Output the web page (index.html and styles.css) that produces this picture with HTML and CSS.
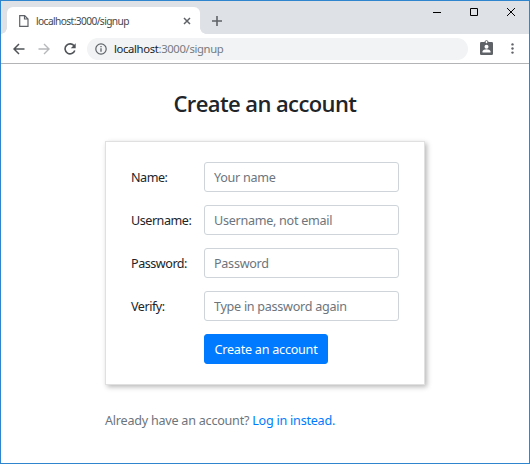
FILE: index.html
```html
<!DOCTYPE html>
<html lang="en">
<head>
<meta charset="utf-8">
<title>Create an account</title>
<link rel="stylesheet" href="styles.css">
</head>
<body>
<div class="window">
  <div class="titlebar">
    <div class="tab">
      <svg class="file" width="10" height="12" viewBox="0 0 10 12"><path d="M.7.7h5l3.3 3.3v7.3H.7zM5.5.7V4H9" fill="none" stroke="#5f6368" stroke-width="1.2"/></svg>
      <span class="tab-title">localhost:3000/signup</span>
      <svg class="tab-close" width="8" height="8" viewBox="0 0 8 8"><path d="M1 1l6 6M7 1L1 7" stroke="#5f6368" stroke-width="1.5"/></svg>
    </div>
    <svg class="new-tab" width="10" height="10" viewBox="0 0 10 10"><path d="M5 0v10M0 5h10" stroke="#5f6368" stroke-width="1.6"/></svg>
    <div class="controls">
      <svg width="8" height="8" viewBox="0 0 8 8"><path d="M0 4.5h8" stroke="#000"/></svg>
      <svg width="8" height="8" viewBox="0 0 8 8"><path d="M.5.5h7v7h-7z" fill="none" stroke="#000"/></svg>
      <svg width="8" height="8" viewBox="0 0 8 8"><path d="M0 0l8 8M8 0L0 8" stroke="#000"/></svg>
    </div>
  </div>
  <div class="toolbar">
    <svg class="back" width="12" height="12" viewBox="0 0 12 12"><path d="M11.5 6H1.3M6 1L1 6l5 5" fill="none" stroke="#505458" stroke-width="1.5"/></svg>
    <svg class="forward" width="12" height="12" viewBox="0 0 12 12"><path d="M.5 6h10.2M6 1l5 5-5 5" fill="none" stroke="#b6b8ba" stroke-width="1.4"/></svg>
    <svg class="reload" width="12" height="12" viewBox="0 0 12 12"><path d="M10.3 3.2A5 5 0 1 0 10.8 7.5" fill="none" stroke="#505458" stroke-width="1.6"/><path d="M11.7.3v5H6.8z" fill="#505458"/></svg>
    <div class="address">
      <svg width="12" height="12" viewBox="0 0 12 12"><circle cx="6" cy="6" r="5.2" fill="none" stroke="#5f6368" stroke-width="1.2"/><path d="M6 5.2v3.6M6 3v1.2" stroke="#5f6368" stroke-width="1.3"/></svg>
      <span class="url">localhost<span class="path">:3000/signup</span></span>
    </div>
    <svg class="badge" width="13" height="15" viewBox="0 0 13 15"><circle cx="6.5" cy="2.1" r="1.5" fill="none" stroke="#5f6368"/><rect y="2" width="13" height="13" rx="1.3" fill="#5f6368"/><circle cx="6.5" cy="2.4" r=".8" fill="#fff"/><circle cx="6.5" cy="6.8" r="2" fill="#fff"/><path d="M2.5 12.5v-1c0-1.5 2.5-2.2 4-2.2s4 .7 4 2.2v1z" fill="#fff"/></svg>
    <svg class="more" width="3" height="11" viewBox="0 0 3 11"><g fill="#5f6368"><circle cx="1.5" cy="1.4" r="1.2"/><circle cx="1.5" cy="5.5" r="1.2"/><circle cx="1.5" cy="9.6" r="1.2"/></g></svg>
  </div>
  <main class="page">
    <h1>Create an account</h1>
    <form class="card">
      <label for="name">Name:</label><input id="name" placeholder="Your name">
      <label for="user">Username:</label><input id="user" placeholder="Username, not email">
      <label for="pass">Password:</label><input id="pass" placeholder="Password">
      <label for="verify">Verify:</label><input id="verify" placeholder="Type in password again">
      <button type="button">Create an account</button>
    </form>
    <p class="login">Already have an account? <a href="#">Log in instead.</a></p>
  </main>
</div>
</body>
</html>
```
FILE: styles.css
```css
* { box-sizing: border-box; }
body { margin: 0; background: #fff; font-family: "Noto Sans", sans-serif; font-size: 12.6px; color: #212529; }
svg { display: block; flex: none; }
.window { width: 530px; height: 464px; border: 1px solid #2f86cf; overflow: hidden; }
.titlebar { display: flex; height: 33px; padding: 6px 0 0 6px; background: #dee1e6; }
.tab { position: relative; display: flex; align-items: center; width: 193px; height: 27px; padding-left: 12px; background: #fff; border-radius: 6px 6px 0 0; }
.tab::before, .tab::after { content: ""; position: absolute; bottom: 0; width: 6px; height: 6px; }
.tab::before { left: -6px; background: radial-gradient(circle at 0 0, transparent 5.5px, #fff 6px); }
.tab::after { right: -6px; background: radial-gradient(circle at 100% 0, transparent 5.5px, #fff 6px); }
.tab-title { width: 155px; margin-left: 7px; font-size: 10.2px; letter-spacing: -.6px; color: #45494d; white-space: nowrap; }
.tab-close { margin-left: -8px; }
.new-tab { margin: 9px 0 0 12px; }
.controls { display: flex; gap: 29px; margin: 1px 14px 0 auto; }
.toolbar { display: flex; align-items: center; height: 30px; padding-left: 12px; border-bottom: 1px solid #b2b4b6; }
.forward { margin-left: 13px; }
.reload { margin-left: 14px; }
.address { display: flex; align-items: center; width: 381px; height: 22px; margin-left: 11px; padding-left: 8px; border-radius: 11px; background: #f1f3f4; }
.url { margin-left: 7px; font-size: 11.3px; letter-spacing: -.36px; white-space: nowrap; }
.path { color: #777b80; }
.badge { margin: -2px 0 0 12px; }
.more { margin-left: 18px; }
.page { width: 320px; margin: 0 0 0 104px; }
h1 { margin: 23px 0 22px; font: 600 22px/32px "Open Sans", sans-serif; letter-spacing: -.6px; text-align: center; white-space: nowrap; }
.card { display: grid; grid-template-columns: 73px 195px; grid-auto-rows: 30px; row-gap: 13px; align-items: center; height: 244px; margin: 0; padding: 20px 25px; border: 1px solid #e0e0e0; box-shadow: 2px 2px 5px rgba(0, 0, 0, .28); }
label { letter-spacing: -.48px; }
input, button { height: 30px; font: inherit; border-radius: 3px; }
input { width: 195px; padding: 0 9px; border: 1px solid #ced4da; background: #fff; letter-spacing: -.28px; }
input::placeholder { color: #6c757d; opacity: 1; }
button { grid-column: 2; width: 124px; padding: 0; border: 1px solid #007bff; background: #007bff; color: #fff; letter-spacing: -.24px; white-space: nowrap; }
.login { margin: 26px 0 0; line-height: 20px; letter-spacing: -.24px; color: #6c757d; white-space: nowrap; }
.login a { color: #007bff; text-decoration: none; }
```
